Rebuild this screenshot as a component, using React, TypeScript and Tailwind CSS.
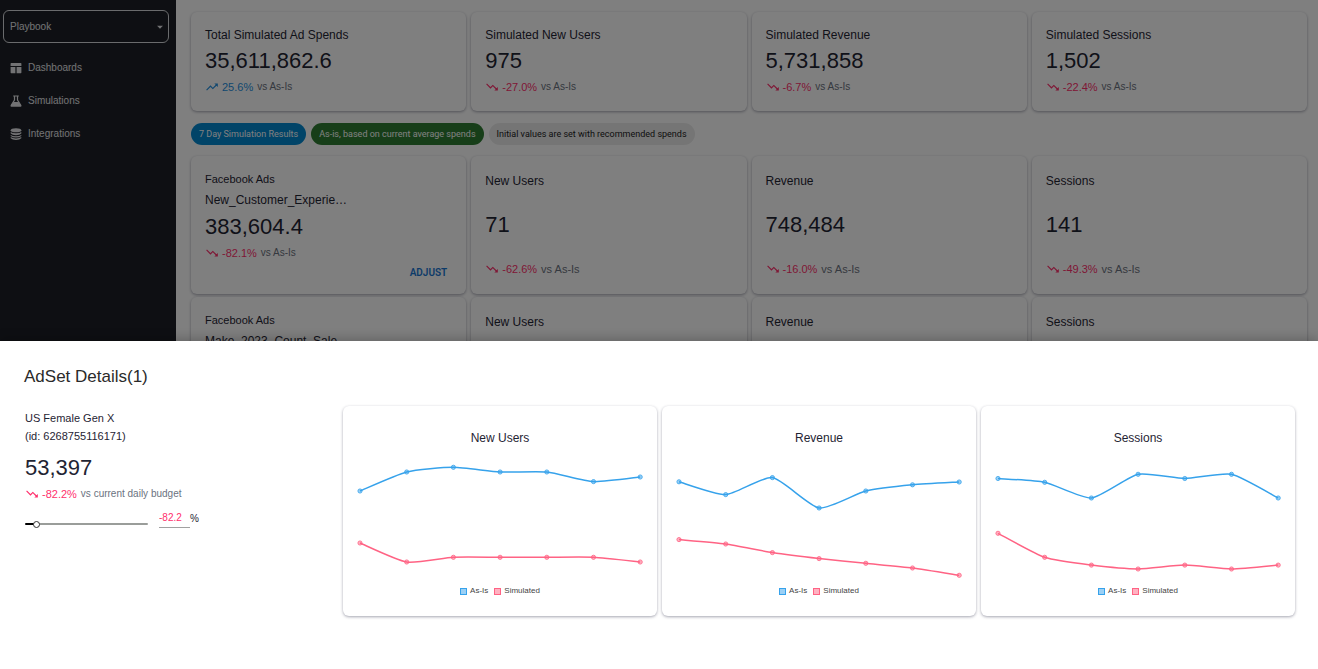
import { useState } from "react";
import { MdArrowDropDown, MdTrendingDown, MdTrendingUp } from "react-icons/md";

const CARD = "rounded-md bg-white shadow-[0_1px_3px_rgba(30,32,60,0.4)]";

function DashboardIcon() {
  return (
    <svg viewBox="0 0 12 12" className="size-3 shrink-0" fill="currentColor" aria-hidden="true">
      <path d="M1.2 1h9.6q.6 0 .6.6V4H.6V1.6Q.6 1 1.2 1zM.6 5h4.8v6.2H1.2q-.6 0-.6-.6zM6.6 5h4.8v5.6q0 .6-.6.6H6.6z" />
    </svg>
  );
}

function FlaskIcon() {
  return (
    <svg viewBox="0 0 12 12" className="size-3 shrink-0" aria-hidden="true">
      <path d="M3.2 1h5.6M4.5 1v4L1.2 10.2M7.5 1v4l3.3 5.2" fill="none" stroke="currentColor" strokeWidth="1.2" />
      <path d="M3.4 7h5.2l2.8 3.4q.3 1.2-.8 1.3H1.4Q.3 11.6.6 10.4z" fill="currentColor" />
    </svg>
  );
}

function DatabaseIcon() {
  return (
    <svg viewBox="0 0 12 12" className="size-3 shrink-0" fill="currentColor" aria-hidden="true">
      <ellipse cx="6" cy="2.3" rx="5.3" ry="2" />
      <path d="M.7 3.9Q2.3 5.3 6 5.3T11.3 3.9V5.5Q9.7 7.3 6 7.3T.7 5.5z" />
      <path d="M.7 6.9Q2.3 8.3 6 8.3T11.3 6.9V7.9Q9.7 9.6 6 9.6T.7 7.9z" />
      <path d="M.7 9.1Q2.3 10.5 6 10.5T11.3 9.1V10.2Q9.7 11.9 6 11.9T.7 10.2z" />
    </svg>
  );
}

function Change({ value, note, large = false }: { value: string; note: string; large?: boolean }) {
  const down = value.startsWith("-");
  const Icon = down ? MdTrendingDown : MdTrendingUp;
  return (
    <p className={`flex items-center text-[11px] leading-4 ${down ? "text-[#ff2f6c]" : "text-[#2490e0]"}`}>
      <Icon className="mr-[3px] size-3.5" aria-hidden="true" />
      <span>{value}</span>
      <span className={`ml-1 text-[#6b7280] ${large ? "text-[11px]" : "text-[10px]"}`}>{note}</span>
    </p>
  );
}

function SummaryCard({ title, value, change }: { title: string; value: string; change: string }) {
  return (
    <section className={`${CARD} px-3.5 pt-[15px] pb-4`}>
      <h2 className="text-[12px] leading-4">{title}</h2>
      <p className="my-1 text-[22px] leading-7">{value}</p>
      <Change value={change} note="vs As-Is" />
    </section>
  );
}

function MetricCard({ title, value, change }: { title: string; value: string; change: string }) {
  return (
    <section className={`${CARD} flex flex-col justify-between px-3.5 py-[17px]`}>
      <h3 className="text-[12px] leading-4">{title}</h3>
      <p className="text-[22px] leading-7">{value}</p>
      <Change value={change} note="vs As-Is" large />
    </section>
  );
}

type Row = { campaign: string; spend: string; change: string; metrics: [string, string, string][] };

function CampaignRow({ row }: { row: Row }) {
  return (
    <div className="mb-[3px] grid grid-cols-4 gap-[5px]">
      <section className={`${CARD} flex flex-col px-3.5 pt-[15px] pb-[13px]`}>
        <p className="text-[11px] leading-4">Facebook Ads</p>
        <h3 className="mt-[5px] text-[12px] leading-4">{row.campaign}</h3>
        <p className="mt-[5px] mb-1 text-[22px] leading-7">{row.spend}</p>
        <Change value={row.change} note="vs As-Is" />
        <button
          type="button"
          className="mt-1 mr-[5px] self-end font-[Roboto,sans-serif] text-[10px] leading-4 font-semibold text-[#1976d2]"
        >
          ADJUST
        </button>
      </section>
      {row.metrics.map(([title, value, change]) => (
        <MetricCard key={title} title={title} value={value} change={change} />
      ))}
    </div>
  );
}

const X0 = 17;
const STEP = 46.7;

function linePath(ys: number[]) {
  const t = 0.1;
  const pts = ys.map((y, i) => [X0 + i * STEP, y]);
  return pts.reduce((d, [x, y], i) => {
    if (i === 0) return `M${x} ${y}`;
    const prev = pts[i - 1];
    const before = pts[i - 2] ?? prev;
    const after = pts[i + 1] ?? [x, y];
    const c1 = [prev[0] + (x - before[0]) * t, prev[1] + (y - before[1]) * t];
    const c2 = [x - (after[0] - prev[0]) * t, y - (after[1] - prev[1]) * t];
    return `${d} C${c1[0]} ${c1[1]} ${c2[0]} ${c2[1]} ${x} ${y}`;
  }, "");
}

function Series({ ys, color }: { ys: number[]; color: string }) {
  return (
    <g stroke={color}>
      <path d={linePath(ys)} fill="none" strokeWidth="1.5" />
      {ys.map((y, i) => (
        <circle key={i} cx={X0 + i * STEP} cy={y} r="2.1" fill={color} fillOpacity="0.5" strokeWidth="0.8" />
      ))}
    </g>
  );
}

function ChartCard({ title, asIs, simulated }: { title: string; asIs: number[]; simulated: number[] }) {
  return (
    <section className={`${CARD} pt-6 pb-[19px]`}>
      <h3 className="text-center text-[12px] leading-4">{title}</h3>
      <svg viewBox="0 0 314 135" className="mt-1 block w-full" role="img" aria-label={title}>
        <Series ys={simulated} color="#ff6384" />
        <Series ys={asIs} color="#36a2eb" />
      </svg>
      <div className="flex justify-center gap-[6px] text-[8px] leading-3 text-[#444]">
        <span className="flex items-center gap-[3px]">
          <i className="size-[7px] border border-[#36a2eb] bg-[#9bd0f5]" />
          As-Is
        </span>
        <span className="flex items-center gap-[3px]">
          <i className="size-[7px] border border-[#ff6384] bg-[#ffb1c1]" />
          Simulated
        </span>
      </div>
    </section>
  );
}

const ROWS: Row[] = [
  {
    campaign: "New_Customer_Experie…",
    spend: "383,604.4",
    change: "-82.1%",
    metrics: [
      ["New Users", "71", "-62.6%"],
      ["Revenue", "748,484", "-16.0%"],
      ["Sessions", "141", "-49.3%"],
    ],
  },
  {
    campaign: "Make_2023_Count_Sale…",
    spend: "383,604.4",
    change: "-82.1%",
    metrics: [
      ["New Users", "71", "-62.6%"],
      ["Revenue", "748,484", "-16.0%"],
      ["Sessions", "141", "-49.3%"],
    ],
  },
];

const CHARTS = [
  {
    title: "New Users",
    asIs: [41, 22, 17.3, 22, 22, 31.6, 27],
    simulated: [93, 112, 107.3, 107.3, 107.3, 107.3, 112],
  },
  {
    title: "Revenue",
    asIs: [31.8, 44.6, 27.6, 58, 41, 34.8, 32],
    simulated: [89.6, 94, 102.6, 108.6, 113.3, 118, 125.3],
  },
  {
    title: "Sessions",
    asIs: [28.5, 32.3, 48, 24.3, 28.5, 24.3, 48],
    simulated: [83.3, 107.3, 115.1, 119, 115.1, 119, 115.1],
  },
];

const NAV = [
  { label: "Dashboards", Icon: DashboardIcon },
  { label: "Simulations", Icon: FlaskIcon },
  { label: "Integrations", Icon: DatabaseIcon },
];

const MIN_CHANGE = -100;
const MAX_CHANGE = 150;

export default function App() {
  const [budget, setBudget] = useState(-82.2);
  const fill = ((budget - MIN_CHANGE) / (MAX_CHANGE - MIN_CHANGE)) * 100;

  return (
    <div className="relative h-screen overflow-hidden bg-white font-['Liberation_Sans',Arial,sans-serif] text-[#1f2433]">
      <div className="flex min-h-full">
        <aside className="w-44 shrink-0 bg-[#1c1f26] px-[3px] pt-2.5 text-[10px] text-[#e4e5e8]">
          <div className="relative mr-1">
            <select
              aria-label="Workspace"
              className="h-[33px] w-full appearance-none rounded-md border border-[#d5d6da] bg-transparent px-1.5"
            >
              <option>Playbook</option>
            </select>
            <MdArrowDropDown className="pointer-events-none absolute top-2.5 right-0.5 size-3.5" aria-hidden="true" />
          </div>
          <nav className="mt-[17px] px-[7px]">
            {NAV.map(({ label, Icon }) => (
              <a key={label} href="#" className="mb-[17px] flex items-center gap-[6px] leading-4">
                <Icon />
                {label}
              </a>
            ))}
          </nav>
        </aside>

        <main className="min-w-0 flex-1 pt-3 pr-[11px] pl-[15px]">
          <div className="grid grid-cols-4 gap-[5px]">
            <SummaryCard title="Total Simulated Ad Spends" value="35,611,862.6" change="25.6%" />
            <SummaryCard title="Simulated New Users" value="975" change="-27.0%" />
            <SummaryCard title="Simulated Revenue" value="5,731,858" change="-6.7%" />
            <SummaryCard title="Simulated Sessions" value="1,502" change="-22.4%" />
          </div>
          <div className="mt-3 mb-[11px] flex gap-[5px] font-[Roboto,sans-serif] text-[9px] leading-[22px]">
            <span className="rounded-full bg-[#0288d1] px-2 text-white">7 Day Simulation Results</span>
            <span className="rounded-full bg-[#2e7d32] px-2 text-white">As-is, based on current average spends</span>
            <span className="rounded-full bg-[#ebebeb] px-2 text-[#212121]">
              Initial values are set with recommended spends
            </span>
          </div>
          {ROWS.map((row) => (
            <CampaignRow key={row.campaign} row={row} />
          ))}
        </main>
      </div>

      <div className="absolute inset-0 bg-black/50" />

      <div
        role="dialog"
        aria-labelledby="adset-title"
        className="absolute inset-x-0 bottom-0 bg-white pt-6 pr-[23px] pb-[53px] pl-6 shadow-[0_-3px_10px_rgba(0,0,0,0.2)]"
      >
        <h2 id="adset-title" className="text-[17px] leading-6 text-[#2a2a2a]">
          AdSet Details(1)
        </h2>
        <div className="mt-[17px] grid grid-cols-4 gap-[5px]">
          <div className="pt-[3px] pl-px">
            <p className="text-[11px] leading-[18px]">US Female Gen X</p>
            <p className="text-[11px] leading-[18px]">(id: 6268755116171)</p>
            <p className="mt-[9px] mb-1 text-[22px] leading-7">53,397</p>
            <Change value={`${budget}%`} note="vs current daily budget" />
            <div className="mt-1.5 flex items-center">
              <input
                type="range"
                aria-label="Budget change"
                min={MIN_CHANGE}
                max={MAX_CHANGE}
                step={0.1}
                value={budget}
                onChange={(e) => setBudget(Number(e.target.value))}
                className="mt-3 h-0.5 w-[123px] appearance-none rounded-full [&::-webkit-slider-thumb]:size-[7px] [&::-webkit-slider-thumb]:appearance-none [&::-webkit-slider-thumb]:rounded-full [&::-webkit-slider-thumb]:border [&::-webkit-slider-thumb]:border-[#333] [&::-webkit-slider-thumb]:bg-white"
                style={{ backgroundImage: `linear-gradient(to right, #000 ${fill}%, #9a9d9a ${fill}%)` }}
              />
              <label className="ml-[11px] flex items-center text-[10px]">
                <span className="border-b border-b-neutral-400">
                  <input
                    type="text"
                    value={budget}
                    onChange={(e) => setBudget(Number(e.target.value) || 0)}
                    className="block h-[19px] w-[31px] pr-2 text-[10px] text-[#ff2f6c]"
                  />
                </span>
                %
              </label>
            </div>
          </div>
          {CHARTS.map((chart) => (
            <ChartCard key={chart.title} {...chart} />
          ))}
        </div>
      </div>
    </div>
  );
}
